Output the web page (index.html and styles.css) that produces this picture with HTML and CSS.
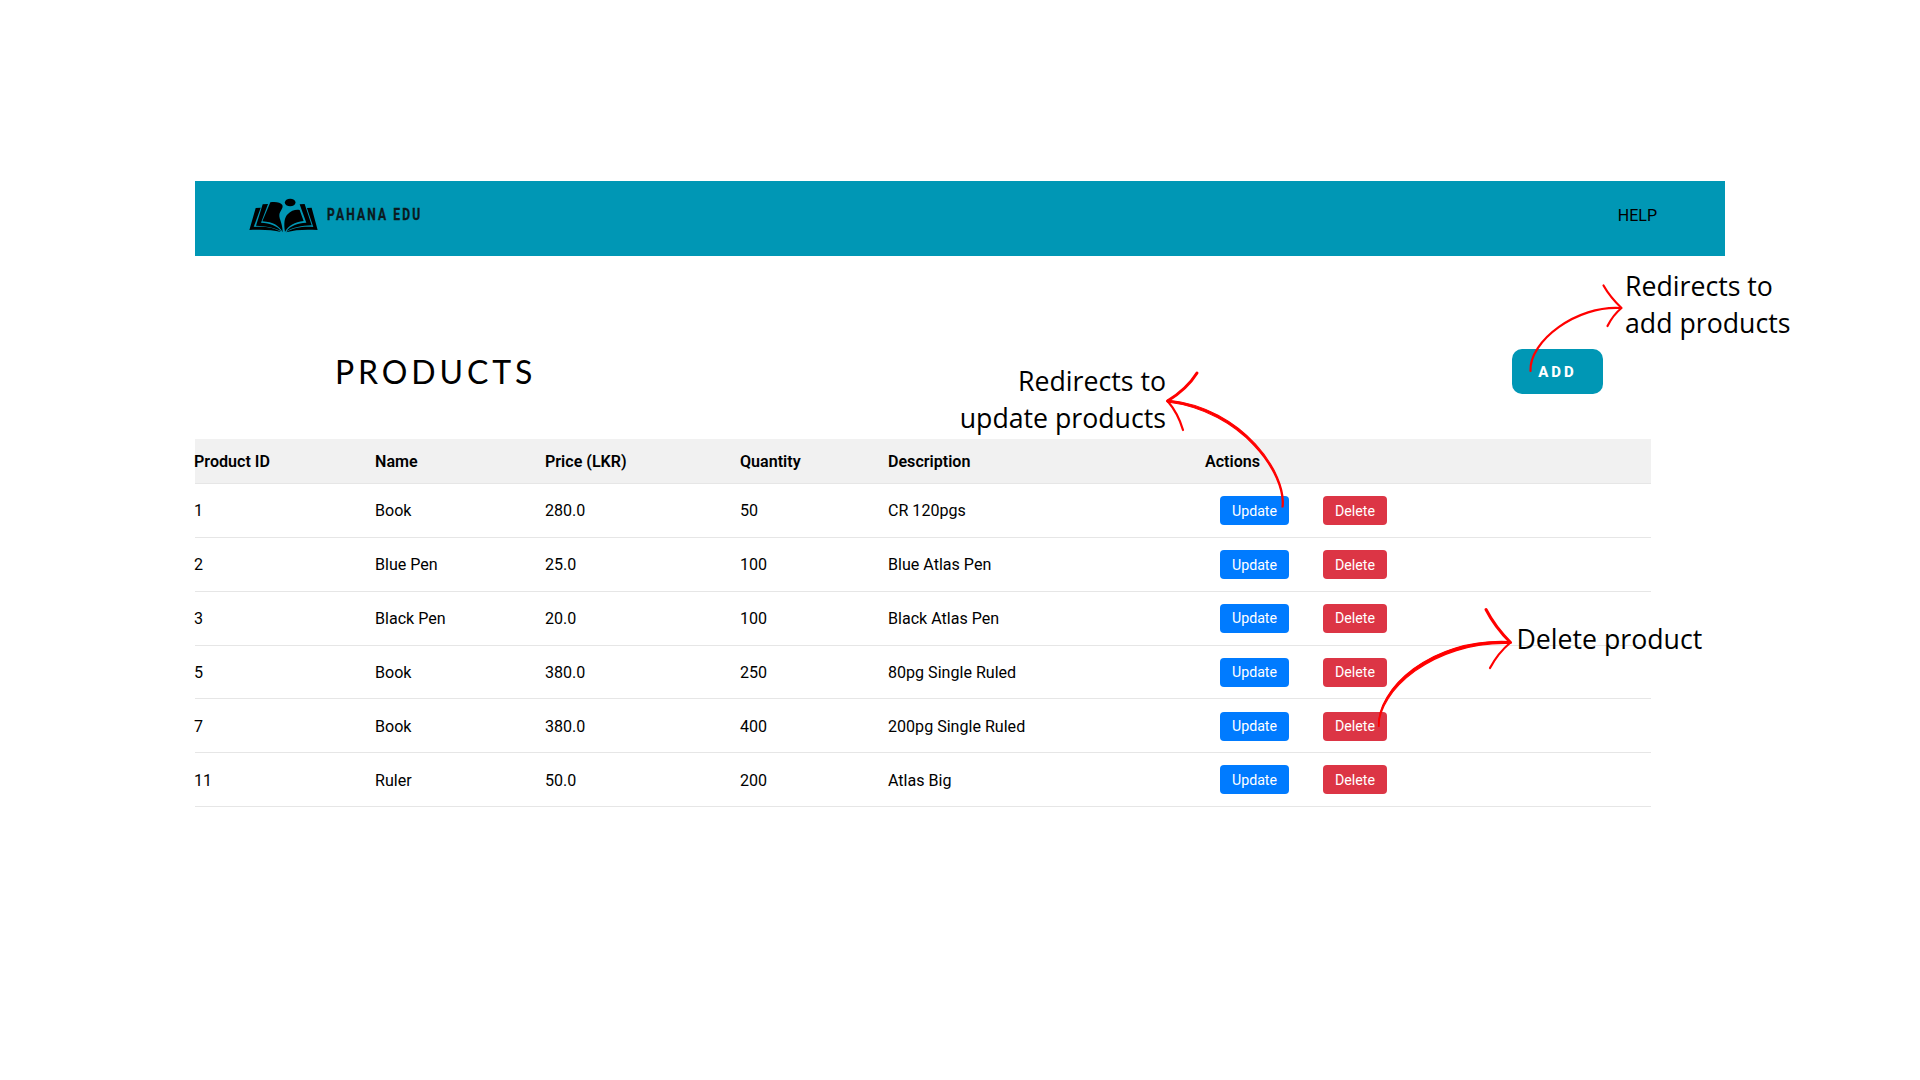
FILE: index.html
```html
<!DOCTYPE html>
<html lang="en">
<head>
<meta charset="utf-8">
<title>Pahana Edu – Products</title>
<link rel="stylesheet" href="styles.css">
</head>
<body>
<main class="page">
  <header class="navbar">
    <div class="brand">
      <svg class="brand-mark" viewBox="207 84 207 106" aria-hidden="true">
        <ellipse cx="330.500" cy="97.500" rx="16" ry="11.500"/>
        <path d="M271 97C286 94 302 97 307 105C311 115 299 123 298 135C297 147 308 160 308 187C299 168 279 156 247 154Z"/>
        <path d="M315 186C311 160 313 143 323 133C334 121 347 118 359 120L371 153C345 156 324 167 315 186Z"/>
        <path d="M248 103L264 102L243 158C270 159 293 168 304 184C284 172 257 168 228 167Z"/>
        <path d="M227 114L242 113L221 171C252 168 283 172 303 186C277 179 242 178 208 180Z"/>
        <path d="M359 103L374 102L395 166C365 167 338 173 319 184C330 168 352 159 379 158Z"/>
        <path d="M381 114L395 113L413 180C378 178 345 179 318 187C340 172 370 169 400 171Z"/>
      </svg>
      <span class="brand-name">PAHANA EDU</span>
    </div>
    <a class="nav-link">HELP</a>
  </header>

  <section class="heading">
    <h1 class="title">PRODUCTS</h1>
    <button class="add">ADD</button>
  </section>

  <section class="table">
    <div class="row head"><span>Product ID</span><span>Name</span><span>Price (LKR)</span><span>Quantity</span><span>Description</span><span>Actions</span></div>
    <div class="row"><span>1</span><span>Book</span><span>280.0</span><span>50</span><span>CR 120pgs</span><div class="actions"><button class="btn update">Update</button><button class="btn delete">Delete</button></div></div>
    <div class="row"><span>2</span><span>Blue Pen</span><span>25.0</span><span>100</span><span>Blue Atlas Pen</span><div class="actions"><button class="btn update">Update</button><button class="btn delete">Delete</button></div></div>
    <div class="row"><span>3</span><span>Black Pen</span><span>20.0</span><span>100</span><span>Black Atlas Pen</span><div class="actions"><button class="btn update">Update</button><button class="btn delete">Delete</button></div></div>
    <div class="row"><span>5</span><span>Book</span><span>380.0</span><span>250</span><span>80pg Single Ruled</span><div class="actions"><button class="btn update">Update</button><button class="btn delete">Delete</button></div></div>
    <div class="row"><span>7</span><span>Book</span><span>380.0</span><span>400</span><span>200pg Single Ruled</span><div class="actions"><button class="btn update">Update</button><button class="btn delete">Delete</button></div></div>
    <div class="row"><span>11</span><span>Ruler</span><span>50.0</span><span>200</span><span>Atlas Big</span><div class="actions"><button class="btn update">Update</button><button class="btn delete">Delete</button></div></div>
  </section>
</main>

<svg class="arrows" viewBox="0 0 1920 1080" aria-hidden="true">
  <g class="arrow thin">
    <path d="M1530.500 371C1529 341 1577 305 1621 308"/>
    <path d="M1603.500 285.500Q1610 297 1621.500 308Q1613 315 1607.500 326"/>
  </g>
  <g class="arrow">
    <path class="taper" d="M1167.500 400C1243 407.500 1287.500 474 1283 507H1282C1286 474 1242 411 1167.500 402Z"/>
    <path class="shaft" d="M1197 373Q1187 389 1167.500 401"/>
    <path class="tail" d="M1167.500 401Q1178 413 1183 430"/>
  </g>
  <g class="arrow">
    <path class="taper" d="M1378.500 726.500C1376.500 690 1430 637.500 1510 641.500V643.500C1432 641 1378 692 1379 726.500Z"/>
    <path class="shaft" d="M1486 609.500Q1495 627 1510.500 642.500"/>
    <path class="tail" d="M1510.500 642.500Q1498 653 1490 668"/>
  </g>
</svg>
<p class="note note-add">Redirects to<br>add products</p>
<p class="note note-update">Redirects to<br>update products</p>
<p class="note note-delete">Delete product</p>
</body>
</html>
```
FILE: styles.css
```css
* { box-sizing: border-box; }
body {
  margin: 0;
  height: 1080px;
  overflow: hidden;
  position: relative;
  background: #fff;
  color: #000;
  font-family: Roboto, "Liberation Sans", sans-serif;
}
.page { width: 1725px; padding: 181px 0 0 194px; }
.navbar {
  height: 75px;
  margin-left: 1px;
  padding: 0 68px 6px 54px;
  display: flex;
  align-items: center;
  justify-content: space-between;
  background: #0097b5;
}
.brand { display: flex; align-items: center; gap: 9px; }
.brand-mark { width: 69px; height: 35.300px; display: block; }
.brand-name {
  font: 700 16px/20px Roboto, sans-serif;
  letter-spacing: 2.900px;
  color: #0b1a20;
  -webkit-text-stroke: .4px #0b1a20;
  transform: scaleX(.75);
  transform-origin: left;
}
.nav-link { font-size: 16px; line-height: 20px; }
.heading {
  height: 183px;
  padding: 48px 122px 0 141px;
  display: flex;
  align-items: center;
  justify-content: space-between;
}
.title { margin: 0; font: 400 32px/40px Lato, sans-serif; letter-spacing: 3.900px; }
.add {
  width: 91px;
  height: 45px;
  padding: 0;
  border: 0;
  border-radius: 10px;
  background: #0097b5;
  color: #fff;
  font: 800 15px/20px Roboto, sans-serif;
  letter-spacing: 3px;
}
.table { width: 1457px; font-size: 16.080px; }
.row {
  height: 53.850px;
  display: grid;
  grid-template-columns: 181px 170px 195px 148px 317px 1fr;
  align-items: center;
  background: linear-gradient(#e6e6e6, #e6e6e6) 1px 100% / 100% 1px no-repeat;
}
.head {
  height: 45px;
  font-weight: 600;
  background: linear-gradient(#e6e6e6, #e6e6e6) 1px 100% / 100% 1px no-repeat, linear-gradient(#f1f1f1, #f1f1f1) 1px 0 / 100% 100% no-repeat;
}
.actions { display: flex; gap: 34px; padding: 0 0 .500px 15px; }
.btn {
  height: 29px;
  padding: 0;
  border: 0;
  border-radius: 4px;
  color: #fff;
  font: 400 14.200px/20px Roboto, sans-serif;
}
.update { width: 69px; background: #007bff; }
.delete { width: 64px; background: #dc3545; }
.arrows { position: absolute; inset: 0; width: 1920px; height: 1080px; pointer-events: none; }
.arrow { fill: none; stroke: #f00; stroke-linecap: round; stroke-linejoin: round; }
.thin { stroke-width: 2.200px; }
.taper { fill: #f00; stroke-width: 1.200px; }
.tail { stroke-width: 2.200px; }
.shaft { stroke-width: 3px; }
.note { position: absolute; margin: 0; font: 400 26.700px/37.300px "Open Sans", sans-serif; white-space: nowrap; }
.note-add { left: 1625px; top: 267px; }
.note-update { right: 754px; top: 362px; text-align: right; }
.note-delete { left: 1516.500px; top: 620px; }
```
